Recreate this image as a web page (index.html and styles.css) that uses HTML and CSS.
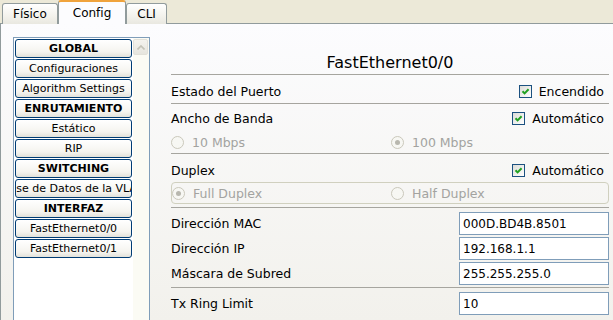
FILE: index.html
```html
<!DOCTYPE html>
<html lang="es">
<head>
    <meta charset="UTF-8">
    <title>Router - Config</title>
    <link rel="stylesheet" href="styles.css">
</head>
<body>
    <div class="tabbar">
        <div class="tab">Físico</div>
        <div class="tab active">Config</div>
        <div class="tab">CLI</div>
    </div>
    <div class="panel">
        <div class="sidebar">
            <div class="list">
                <div class="items">
                    <div class="item head">GLOBAL</div>
                    <div class="item">Configuraciones</div>
                    <div class="item">Algorithm Settings</div>
                    <div class="item head">ENRUTAMIENTO</div>
                    <div class="item">Estático</div>
                    <div class="item">RIP</div>
                    <div class="item head">SWITCHING</div>
                    <div class="item"><span>Base de Datos de la VLAN</span></div>
                    <div class="item head">INTERFAZ</div>
                    <div class="item">FastEthernet0/0</div>
                    <div class="item">FastEthernet0/1</div>
                </div>
                <div class="scrollbar">
                    <div class="scroll-up">
                        <svg width="8" height="5" viewBox="0 0 8 5"><path d="M0.5 4.5 L4 1 L7.5 4.5" fill="none" stroke="#c4c3b8" stroke-width="1.6"/></svg>
                    </div>
                </div>
            </div>
        </div>

        <div class="main">
            <h2>FastEthernet0/0</h2>

            <div class="section s-port">
                <div class="row">
                    <span>Estado del Puerto</span>
                    <label class="check"><span class="box"><svg width="11" height="11" viewBox="0 0 11 11"><path d="M2.5 5.2 L4.6 7.4 L8.6 3.2" fill="none" stroke="#21a121" stroke-width="2"/></svg></span>Encendido</label>
                </div>
            </div>

            <div class="section s-band">
                <div class="row">
                    <span>Ancho de Banda</span>
                    <label class="check"><span class="box"><svg width="11" height="11" viewBox="0 0 11 11"><path d="M2.5 5.2 L4.6 7.4 L8.6 3.2" fill="none" stroke="#21a121" stroke-width="2"/></svg></span>Automático</label>
                </div>
                <div class="options">
                    <div class="opt"><span class="radio"></span>10 Mbps</div>
                    <div class="opt"><span class="radio on"></span>100 Mbps</div>
                </div>
            </div>

            <div class="section s-duplex">
                <div class="row">
                    <span>Duplex</span>
                    <label class="check"><span class="box"><svg width="11" height="11" viewBox="0 0 11 11"><path d="M2.5 5.2 L4.6 7.4 L8.6 3.2" fill="none" stroke="#21a121" stroke-width="2"/></svg></span>Automático</label>
                </div>
                <div class="options group">
                    <div class="opt"><span class="radio on"></span>Full Duplex</div>
                    <div class="opt"><span class="radio"></span>Half Duplex</div>
                </div>
            </div>

            <div class="section s-addr">
                <div class="field">
                    <span>Dirección MAC</span>
                    <input type="text" value="000D.BD4B.8501">
                </div>
                <div class="field">
                    <span>Dirección IP</span>
                    <input type="text" value="192.168.1.1">
                </div>
                <div class="field">
                    <span>Máscara de Subred</span>
                    <input type="text" value="255.255.255.0">
                </div>
            </div>

            <div class="section s-tx">
                <div class="field">
                    <span>Tx Ring Limit</span>
                    <input type="text" value="10">
                </div>
            </div>
        </div>
    </div>
</body>
</html>
```

FILE: styles.css
```css
body {
    margin: 0;
    font-family: "DejaVu Sans", Verdana, sans-serif;
    font-size: 12.5px;
    color: #000;
    background-color: #fcfcfe;
    overflow: hidden;
}
.tabbar {
    display: flex;
    align-items: flex-end;
    height: 23px;
    padding-left: 2px;
    background-color: #ece9d8;
    border-bottom: 1px solid #919b9c;
}
.tab {
    height: 20px;
    line-height: 20px;
    padding: 0 10px;
    font-size: 12px;
    margin-bottom: -1px;
    border: 1px solid #919b9c;
    border-bottom: none;
    border-radius: 3px 3px 0 0;
    background: linear-gradient(#ffffff, #f3f2ec 60%, #e9e8e0);
}
.tab.active {
    height: 22px;
    line-height: 22px;
    padding: 0 14px;
    border-top: 2px solid #f0a33c;
    background: #fcfcfe;
}
.panel {
    display: flex;
    height: 296px;
    border-left: 1px solid #919b9c;
    background: linear-gradient(#fcfcfe, #f2f1ec);
}
.sidebar {
    display: flex;
    flex-shrink: 0;
    padding: 13px 0 0 12px;
}
.list {
    display: flex;
    width: 137px;
    box-sizing: border-box;
    border: 1px solid #7f9db9;
    border-bottom: none;
    background-color: #fff;
}
.items {
    display: flex;
    flex-direction: column;
    gap: 1px;
    padding: 1px 0 0 1px;
    width: 117px;
}
.item {
    display: flex;
    justify-content: center;
    align-items: center;
    height: 17px;
    font-size: 11px;
    white-space: nowrap;
    overflow: hidden;
    border: 1px solid #003c74;
    border-radius: 3px;
    background: linear-gradient(#ffffff, #f5f4ef 70%, #e3e2da);
}
.item span {
    flex-shrink: 0;
}
.item.head {
    font-weight: bold;
}
.scrollbar {
    width: 16px;
    margin-left: 1px;
    background-color: #fbfbf4;
}
.scroll-up {
    display: flex;
    justify-content: center;
    align-items: center;
    width: 13px;
    height: 14px;
    margin-top: 1px;
    border: 1px solid #e2e1d9;
    border-radius: 2px;
    background: linear-gradient(#f4f3ee, #e6e5de);
}
.main {
    flex: 1;
    min-width: 0;
    padding: 28px 4px 0 21px;
}
h2 {
    margin: 0;
    font-size: 16px;
    font-weight: normal;
    line-height: 22px;
    text-align: center;
    border-bottom: 1px solid #a6a59f;
}
.section {
    border-bottom: 1px solid #a6a59f;
}
.s-port {
    padding: 8px 0 4px;
}
.s-band {
    padding: 6px 0 3px;
}
.s-duplex {
    padding: 8px 0 3px;
}
.s-addr {
    display: flex;
    flex-direction: column;
    gap: 2px;
    padding: 4px 0 2px;
}
.s-tx {
    padding-top: 4px;
    border-bottom: none;
}
.row {
    display: flex;
    justify-content: space-between;
    align-items: center;
    height: 16px;
}
.check {
    display: flex;
    align-items: center;
    gap: 7px;
    padding-right: 5px;
}
.box {
    display: flex;
    justify-content: center;
    align-items: center;
    width: 11px;
    height: 11px;
    border: 1px solid #1c5180;
    background: linear-gradient(135deg, #dcdcd7, #ffffff);
}
.options {
    display: flex;
    align-items: center;
    height: 16px;
    margin-top: 8px;
    color: #a3a3a0;
}
.options.group {
    height: 20px;
    margin-top: 4px;
    border: 1px solid #d0d0bf;
    border-radius: 4px;
}
.opt {
    display: flex;
    align-items: center;
    gap: 8px;
    width: 220px;
}
.opt:last-child {
    width: auto;
    flex: 1;
}
.group .opt:first-child {
    width: 219px;
}
.radio {
    position: relative;
    width: 11px;
    height: 11px;
    border: 1px solid #cac8bb;
    border-radius: 50%;
    background-color: #f7f7f3;
}
.radio.on::after {
    content: "";
    position: absolute;
    left: 3px;
    top: 3px;
    width: 5px;
    height: 5px;
    border-radius: 50%;
    background-color: #b8b7ae;
}
.field {
    display: flex;
    justify-content: space-between;
    align-items: center;
}
.field input {
    width: 150px;
    height: 23px;
    box-sizing: border-box;
    padding: 0 3px;
    border: 1px solid #7f9db9;
    font-family: "DejaVu Sans", Verdana, sans-serif;
    font-size: 12px;
    color: #000;
    background-color: #fff;
}
```
